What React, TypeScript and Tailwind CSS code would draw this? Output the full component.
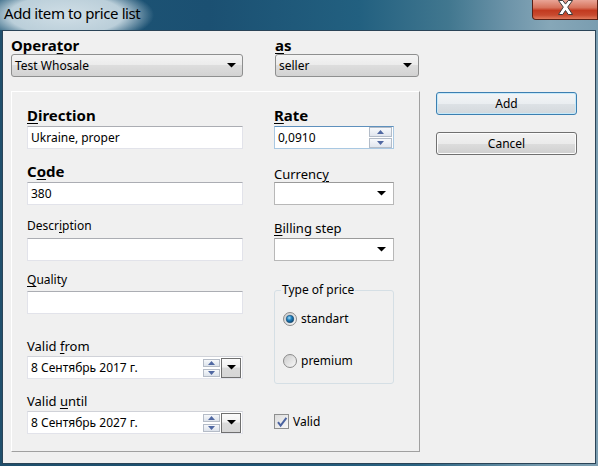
const ui = "font-['Noto_Sans',sans-serif] text-black";

const DownArrow = () => (
  <svg width="9" height="5" viewBox="0 0 9 5">
    <path d="M0 0h9L4.5 4.6z" fill="#000" />
  </svg>
);

const SpinArrow = ({ up }: { up?: boolean }) => (
  <svg width="7" height="4" viewBox="0 0 7 4">
    <path d={up ? "M3.5 0L7 4H0z" : "M0 0h7L3.5 4z"} fill="#5068a2" />
  </svg>
);

const TextBox = ({ value = "", className = "" }: { value?: string; className?: string }) => (
  <div className={`h-[23px] flex items-center bg-white border border-[#e2e3ea] border-t-[#abadb3] pl-[3px] text-[12px] leading-none ${className}`}>
    {value}
  </div>
);

const ReadCombo = ({ value, width }: { value: string; width: string }) => (
  <div className={`${width} h-[23px] flex items-center justify-between rounded-[3px] border border-[#8e8f8f] bg-[linear-gradient(#f4f4f4,#ebebeb_50%,#dddddd_50%,#d2d2d2)] pl-[3px] pr-[6px] text-[12px] leading-none`}>
    <span>{value}</span>
    <DownArrow />
  </div>
);

const EditCombo = () => (
  <div className="h-[23px] flex items-center justify-end bg-white border border-[#b8b8b8] border-t-[#9a9a9a] pr-[7px]">
    <DownArrow />
  </div>
);

const DateBox = ({ value }: { value: string }) => (
  <div className="h-[23px] flex items-center bg-white border border-[#e2e3ea] border-t-[#d0d2d8] pl-[3px] pr-[1px] text-[12px] leading-none">
    <span className="flex-1">{value}</span>
    <div className="flex flex-col gap-[2px] mr-[1px]">
      <div className="w-[17px] h-[8px] flex items-center justify-center border border-[#b5bcc7] bg-[linear-gradient(#f6f8fb,#dde3eb)]">
        <SpinArrow up />
      </div>
      <div className="w-[17px] h-[8px] flex items-center justify-center border border-[#b5bcc7] bg-[linear-gradient(#f6f8fb,#dde3eb)]">
        <SpinArrow />
      </div>
    </div>
    <div className="w-[20px] h-[20px] flex items-center justify-center border border-[#6f6f6f] bg-[linear-gradient(#fbfbfb,#f1f1f1_45%,#dadada_50%,#d6d6d6)]">
      <DownArrow />
    </div>
  </div>
);

const Radio = ({ checked }: { checked?: boolean }) => (
  <svg width="14" height="14" viewBox="0 0 14 14">
    <defs>
      <linearGradient id={checked ? "rg1" : "rg2"} x1="0" y1="0" x2="1" y2="1">
        <stop offset="0" stopColor="#c9c9c9" />
        <stop offset="1" stopColor="#fbfbfb" />
      </linearGradient>
      <radialGradient id="dot" cx="0.4" cy="0.35" r="0.7">
        <stop offset="0" stopColor="#a6dcf7" />
        <stop offset="0.45" stopColor="#1d80bf" />
        <stop offset="1" stopColor="#0b3e66" />
      </radialGradient>
    </defs>
    <circle cx="7" cy="7" r="6.5" fill={`url(#${checked ? "rg1" : "rg2"})`} stroke="#8a8a8a" />
    {checked && <circle cx="7" cy="7" r="3.8" fill="url(#dot)" stroke="#1a4a70" strokeWidth="0.6" />}
  </svg>
);

const CheckBox = () => (
  <div className="w-[15px] h-[15px] border border-[#8e8f8f] bg-[linear-gradient(135deg,#dcdcdc,#f8f8f8)] flex items-center justify-center">
    <svg width="12" height="12" viewBox="0 0 12 12">
      <path d="M2 6.2l2.6 3.3L10.4 1.8" fill="none" stroke="#4b63a0" strokeWidth="2" />
    </svg>
  </div>
);

export default function App() {
  return (
    <div className={`${ui} w-[598px] h-[466px] flex flex-col px-[2px] pb-[2px] bg-[linear-gradient(90deg,#1f4f6c,#1c5273_40%,#2b6483_70%,#7298ac_90%,#7c9eb1)]`}>
      {/* title bar */}
      <div className="h-[30px] -mx-[2px] flex items-start bg-[image:radial-gradient(ellipse_88px_30px_at_66px_15px,rgba(214,227,234,0.97),rgba(200,217,226,0.92)_65%,rgba(120,160,180,0)_100%),linear-gradient(90deg,#1e5676,#1b5072_35%,#226080_60%,#41778f_75%,#6d94a9_85%,#86a7b8_92%,#7a9db0)]">
        <span className="ml-[4px] mt-[3px] text-[15px] tracking-[-0.4px] leading-[20px] text-black">Add item to price list</span>
        <div className="ml-auto w-[66px] h-[20px] flex items-center justify-center pb-[4px] rounded-bl-[4px] border border-t-0 border-[#5a2015] bg-[linear-gradient(#e9a596,#d7735c_40%,#c23a20_55%,#c84a2f_80%,#e07a5c)]">
          <svg width="19" height="15" viewBox="0 0 19 15">
            <path d="M2.5 0.5h4.3l2.7 3.6 2.7-3.6h4.3l-4.8 6.6 4.8 7.4h-4.3l-2.7-4-2.7 4H2.5l4.8-7.4z" fill="#ffffff" stroke="#3b3b3b" strokeWidth="1" strokeLinejoin="round" />
          </svg>
        </div>
      </div>

      {/* client area */}
      <div className="flex-1 border border-[#2a4457] bg-[#f0f0f0]">
        {/* operator row */}
        <div className="flex pt-[7px]">
          <div className="ml-[8px] w-[232px]">
            <div className="text-[15px] font-bold leading-none mb-[1px]">
              Opera<u className="underline-offset-2">t</u>or
            </div>
            <ReadCombo value="Test Whosale" width="w-[232px]" />
          </div>
          <div className="ml-[32px] w-[144px]">
            <div className="text-[15px] font-bold leading-none mb-[1px]">
              <u className="underline-offset-2">a</u>s
            </div>
            <ReadCombo value="seller" width="w-[144px]" />
          </div>
        </div>

        <div className="flex mt-[14px]">
          {/* panel */}
          <div className="ml-[8px] w-[409px] h-[361px] border border-white border-r-[#a0a0a0] border-b-[#a0a0a0] flex">
            {/* left column */}
            <div className="ml-[15px] w-[216px] flex flex-col">
              <div className="mt-[16px] mb-[3px] text-[15px] font-bold leading-none">
                <u className="underline-offset-2">D</u>irection
              </div>
              <TextBox value="Ukraine, proper" />

              <div className="mt-[15px] mb-[3px] text-[15px] font-bold leading-none">
                C<u className="underline-offset-2">o</u>de
              </div>
              <TextBox value="380" />

              <div className="mt-[15px] mb-[6px] text-[12px] leading-none">
                Descr<u className="underline-offset-2">i</u>ption
              </div>
              <TextBox />

              <div className="mt-[13px] mb-[5px] text-[12px] leading-none">
                <u className="underline-offset-2">Q</u>uality
              </div>
              <TextBox />

              <div className="mt-[26px] mb-[3px] text-[13px] leading-none">
                Valid <u className="underline-offset-2">f</u>rom
              </div>
              <DateBox value="8 Сентябрь 2017 г." />

              <div className="mt-[16px] mb-[3px] text-[13px] leading-none">
                Valid <u className="underline-offset-2">u</u>ntil
              </div>
              <DateBox value="8 Сентябрь 2027 г." />
            </div>

            {/* right column */}
            <div className="ml-[31px] w-[120px] flex flex-col">
              <div className="mt-[16px] mb-[3px] text-[15px] font-bold leading-none">
                <u className="underline-offset-2">R</u>ate
              </div>
              <div className="h-[23px] flex items-center bg-white border border-[#a9c8e2] border-t-[#5e90bd] pl-[3px] pr-[1px] text-[12px] leading-none">
                <span className="flex-1">0,0910</span>
                <div className="flex flex-col gap-[1px]">
                  <div className="w-[23px] h-[10px] flex items-center justify-center border border-[#b3bcc8] bg-[linear-gradient(#f7f9fc,#e1e6ee)]">
                    <SpinArrow up />
                  </div>
                  <div className="w-[23px] h-[10px] flex items-center justify-center border border-[#b3bcc8] bg-[linear-gradient(#f7f9fc,#e1e6ee)]">
                    <SpinArrow />
                  </div>
                </div>
              </div>

              <div className="mt-[19px] mb-[1px] text-[13px] leading-none">
                Currenc<u className="underline-offset-2">y</u>
              </div>
              <EditCombo />

              <div className="mt-[17px] mb-[3px] text-[13px] leading-none">
                <u className="underline-offset-2">B</u>illing step
              </div>
              <EditCombo />

              <fieldset className="mt-[23px] h-[100px] border border-[#d5dfe5] rounded-[3px] pl-[8px]">
                <legend className="-ml-[2px] px-[1px] text-[12px] leading-none">Type of price</legend>
                <div className="mt-[16px] flex items-center gap-[4px] text-[12px] leading-none">
                  <Radio checked />
                  <span>standart</span>
                </div>
                <div className="mt-[28px] flex items-center gap-[4px] text-[12px] leading-none">
                  <Radio />
                  <span>premium</span>
                </div>
              </fieldset>

              <div className="mt-[30px] flex items-center gap-[4px] text-[12px] leading-none">
                <CheckBox />
                <span>Valid</span>
              </div>
            </div>
          </div>

          {/* buttons */}
          <div className="ml-[16px] mt-[1px] w-[141px] flex flex-col gap-[17px]">
            <div className="h-[23px] rounded-[3px] border border-[#3c7fb1] shadow-[inset_0_0_0_1px_#c6e9f9] bg-[linear-gradient(#f2f5f7,#eaeef1_50%,#dde2e6_50%,#d3d8dc)] flex items-center justify-center text-[12px] leading-none">
              Add
            </div>
            <div className="h-[23px] rounded-[3px] border border-[#707070] shadow-[inset_0_0_0_1px_#fcfcfc] bg-[linear-gradient(#f2f2f2,#ebebeb_50%,#dddddd_50%,#cfcfcf)] flex items-center justify-center text-[12px] leading-none">
              Cancel
            </div>
          </div>
        </div>
      </div>
    </div>
  );
}
